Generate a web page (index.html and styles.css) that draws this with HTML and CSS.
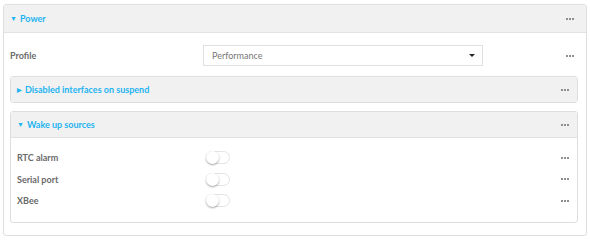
FILE: index.html
```html
<!DOCTYPE html>
<html lang="en">
<head>
    <meta charset="UTF-8">
    <title>Power</title>
    <link rel="stylesheet" href="styles.css">
</head>
<body>
    <div class="panel outer">
        <div class="panel-head">
            <span class="title"><span class="caret">&#9660;</span>Power</span>
            <span class="more"></span>
        </div>
        <div class="panel-body">
            <div class="row first">
                <label class="lbl">Profile</label>
                <div class="select">
                    <span>Performance</span>
                    <span class="arrow"></span>
                </div>
                <span class="more"></span>
            </div>

            <div class="panel inner closed">
                <div class="panel-head">
                    <span class="title"><span class="caret side">&#9654;</span>Disabled interfaces on suspend</span>
                    <span class="more"></span>
                </div>
            </div>

            <div class="panel inner">
                <div class="panel-head">
                    <span class="title"><span class="caret">&#9660;</span>Wake up sources</span>
                    <span class="more"></span>
                </div>
                <div class="panel-body list">
                    <div class="row small">
                        <label class="lbl">RTC alarm</label>
                        <span class="toggle"></span>
                        <span class="more"></span>
                    </div>
                    <div class="row small">
                        <label class="lbl">Serial port</label>
                        <span class="toggle"></span>
                        <span class="more"></span>
                    </div>
                    <div class="row small">
                        <label class="lbl">XBee</label>
                        <span class="toggle"></span>
                        <span class="more"></span>
                    </div>
                </div>
            </div>
        </div>
    </div>
</body>
</html>
```

FILE: styles.css
```css
body {
    margin: 0;
    padding: 4px 3px 6px 3px;
    font-family: 'Lato', 'Noto Sans', sans-serif;
    font-size: 9px;
    color: #666;
    background: #fff;
}
.panel {
    border: 1px solid #dedede;
    border-radius: 3px;
    background: #fff;
}
.panel-head {
    display: flex;
    align-items: center;
    justify-content: space-between;
    height: 27px;
    padding: 0 12px 0 6px;
    background: #f1f1f1;
    border-bottom: 1px solid #e2e2e2;
}
.title {
    color: #1db4f2;
    font-weight: bold;
    font-size: 9px;
}
.caret {
    font-size: 7px;
    margin-right: 3px;
    vertical-align: 1px;
}
.caret.side {
    font-size: 6px;
}
/* petit menu "..." a droite */
.more {
    display: inline-block;
    width: 8px;
    height: 2px;
    background: repeating-linear-gradient(to right, #8f8f8f 0 2px, transparent 2px 3px);
}
.outer > .panel-body {
    padding: 12px 8px 12px 6px;
}
.row {
    display: flex;
    align-items: center;
    height: 21px;
}
.row.first {
    padding-right: 4px;
}
.lbl {
    width: 193px;
    font-weight: bold;
    color: #6a6a6a;
}
.select {
    width: 263px;
    height: 19px;
    border: 1px solid #e0e0e0;
    display: flex;
    align-items: center;
    justify-content: space-between;
    padding: 0 7px 0 8px;
    color: #777;
}
.arrow {
    width: 0;
    height: 0;
    border-left: 3px solid transparent;
    border-right: 3px solid transparent;
    border-top: 3px solid #222;
}
.row .more {
    margin-left: auto;
}
.inner {
    margin-top: 10px;
}
.inner + .inner {
    margin-top: 8px;
}
.inner .panel-head {
    height: 25px;
    padding-right: 8px;
}
.closed .panel-head {
    height: 25px;
    border-bottom: none;
}
.list {
    padding: 9px 8px 10px 6px;
}
.row.small {
    height: 21.5px;
}
.list .lbl {
    width: 189px;
}
.toggle {
    position: relative;
    width: 24px;
    height: 13px;
    border: 1px solid #e4e4e4;
    border-radius: 8px;
    box-sizing: border-box;
    background: #fff;
}
.toggle::after {
    content: "";
    position: absolute;
    left: -1px;
    top: -1px;
    width: 13px;
    height: 13px;
    border-radius: 50%;
    background: #fff;
    box-shadow: 0 1px 2px rgba(0,0,0,0.35);
}
```
